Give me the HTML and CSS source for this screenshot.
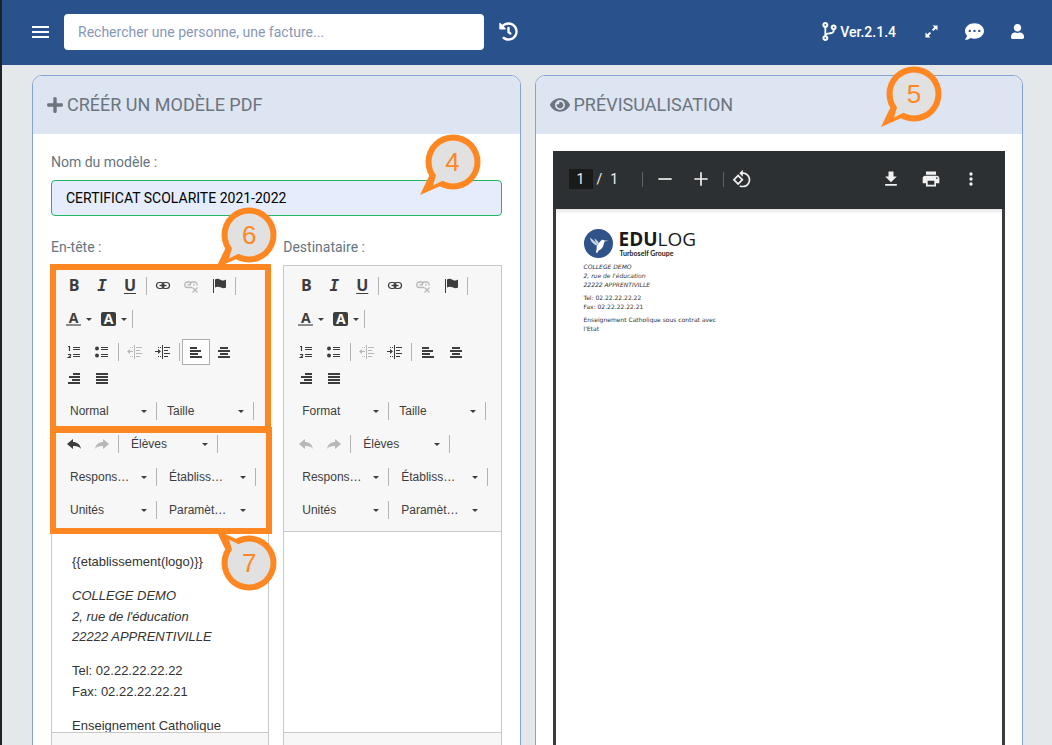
FILE: index.html
```html
<!DOCTYPE html>
<html lang="fr">
<head>
<meta charset="utf-8">
<title>Créer un modèle PDF</title>
<link rel="stylesheet" href="styles.css">
</head>
<body>
<svg class="sprite" aria-hidden="true">
  <symbol id="link" viewBox="0 0 16 16"><g fill="none" stroke="currentColor"><rect x="1.500" y="4.500" width="7.500" height="6" rx="3" stroke-width="1.200"/><rect x="7" y="4.500" width="7.500" height="6" rx="3" stroke-width="1.200"/><path d="M4.500 7.500h7" stroke-width="1.300"/></g></symbol>
  <symbol id="unlink" viewBox="0 0 16 16"><g fill="none" stroke="currentColor" stroke-width="1.300"><path d="M9 9.500H4.500a2.500 2.500 0 0 1 0-5.500H6a3 3 0 0 1 2.500 1.500M7 6.800A2.800 2.800 0 0 1 9.500 4h2a2.600 2.600 0 0 1 2.500 3.500M4.500 6.800H8M10 6.800h2"/><path d="M9.500 9.500l5 5m0-5l-5 5"/></g></symbol>
  <symbol id="flag" viewBox="0 0 16 16"><path fill="currentColor" d="M2 1h1v14H2zM4 1.500C6 0 8 1 10 2s3.500.5 5-.500v8c-1.500 1-3 1-5 0s-4-1-6 0z"/></symbol>
  <symbol id="ol" viewBox="0 0 16 16"><g fill="none" stroke="currentColor" stroke-width="1.200"><path d="M2 2.500h1.500V7M2 10.500h2.500v1.500L2.500 13.500h2.500M7 3.500h7M7 5.500h7M7 10.500h7M7 12.500h7"/></g></symbol>
  <symbol id="ul" viewBox="0 0 16 16"><g fill="currentColor"><circle cx="3" cy="4.500" r="2"/><circle cx="3" cy="11.500" r="2"/><path d="M7 3h7v1H7zM7 5h7v1H7zM7 10h7v1H7zM7 12h7v1H7z"/></g></symbol>
  <symbol id="outdent" viewBox="0 0 16 16"><path fill="currentColor" d="M7 1h1v14H7zM9 3h6v1H9zM9 6h4v1H9zM9 9h6v1H9zM9 12h4v1H9zM0 7.500L3 5v2h3v1H3v2zM3 3h1v1H3zM5 3h1v1H5zM3 12h1v1H3zM5 12h1v1H5z"/></symbol>
  <symbol id="indent" viewBox="0 0 16 16"><path fill="currentColor" d="M7 1h1v14H7zM9 3h6v1H9zM9 6h4v1H9zM9 9h6v1H9zM9 12h4v1H9zM6 7.500L3 5v2H0v1h3v2zM3 3h1v1H3zM5 3h1v1H5zM3 12h1v1H3zM5 12h1v1H5z"/></symbol>
  <symbol id="left" viewBox="0 0 16 16"><path fill="currentColor" d="M2 3h7v2H2zM2 6h11v2H2zM2 9h8v2H2zM2 12h12v2H2z"/></symbol>
  <symbol id="center" viewBox="0 0 16 16"><path fill="currentColor" d="M4 3h8v2H4zM2 6h12v2H2zM4 9h8v2H4zM2 12h12v2H2z"/></symbol>
  <symbol id="right" viewBox="0 0 16 16"><path fill="currentColor" d="M7 3h7v2H7zM3 6h11v2H3zM6 9h8v2H6zM2 12h12v2H2z"/></symbol>
  <symbol id="justify" viewBox="0 0 16 16"><path fill="currentColor" d="M2 3h12v2H2zM2 6h12v2H2zM2 9h12v2H2zM2 12h12v2H2z"/></symbol>
  <symbol id="undo" viewBox="0 0 16 16"><path fill="currentColor" d="M1 8l6-5v3c4 0 7 2 8 7-2-2.500-4-3.200-8-3v3z"/></symbol>
  <symbol id="redo" viewBox="0 0 16 16"><path fill="currentColor" d="M15 8L9 3v3c-4 0-7 2-8 7 2-2.500 4-3.200 8-3v3z"/></symbol>
  <symbol id="bubble" viewBox="0 0 62 62"><circle cx="34" cy="28" r="27.500" fill="#ff8721"/><path fill="#ff8721" d="M1 61L12 38l14 12z"/><circle cx="34" cy="28" r="21.500" fill="#e1e1e1"/><path fill="#e1e1e1" d="M18 38l-4 13.500L25 46z"/></symbol>
</svg>

<div class="app">
  <header class="topbar">
    <button class="menu" aria-label="Menu"><span></span><span></span><span></span></button>
    <input class="search" type="search" aria-label="Rechercher" placeholder="Rechercher une personne, une facture...">
    <button class="history" aria-label="Historique"><svg viewBox="0 0 512 512" width="19" height="19"><path fill="currentColor" d="M504 255.531c.253 136.640-111.180 248.372-247.820 248.468-59.015.042-113.223-20.530-155.822-54.911-11.077-8.940-11.905-25.541-1.839-35.607l11.267-11.267c8.609-8.609 22.353-9.551 31.891-1.984C173.062 425.135 212.781 440 256 440c101.705 0 184-82.311 184-184 0-101.705-82.311-184-184-184-48.814 0-93.149 18.969-126.068 49.932l50.754 50.754c10.080 10.080 2.941 27.314-11.313 27.314H24c-8.837 0-16-7.163-16-16V38.627c0-14.254 17.234-21.393 27.314-11.314l49.372 49.372C129.209 34.136 189.552 8 256 8c136.810 0 247.747 110.780 248 247.531zm-180.912 78.784l9.823-12.630c8.138-10.463 6.253-25.542-4.210-33.679L288 256.349V152c0-13.255-10.745-24-24-24h-16c-13.255 0-24 10.745-24 24v135.651l65.409 50.874c10.463 8.137 25.541 6.253 33.679-4.210z"/></svg></button>
    <a class="version" href="#"><svg viewBox="0 0 384 512" width="15" height="19"><path fill="currentColor" d="M384 144c0-44.200-35.800-80-80-80s-80 35.800-80 80c0 36.400 24.300 67.100 57.500 76.800-.6 16.100-4.200 28.500-11 36.900-15.400 19.200-49.300 22.400-85.200 25.700-28.200 2.600-57.400 5.400-81.300 16.900v-144c32.500-10.200 56-40.500 56-76.300 0-44.200-35.800-80-80-80S0 35.800 0 80c0 35.800 23.500 66.100 56 76.300v199.300C23.500 365.900 0 396.200 0 432c0 44.200 35.800 80 80 80s80-35.800 80-80c0-34-21.200-63.100-51.200-74.600 3.100-5.200 7.800-9.800 14.900-13.400 16.200-8.200 40.400-10.400 66.100-12.800 42.200-3.900 90-8.400 118.200-43.400 14-17.400 21.100-39.800 21.600-67.900 31.600-10.800 54.400-40.700 54.400-75.900zM80 56a24 24 0 1 1 0 48 24 24 0 1 1 0-48zm0 352a24 24 0 1 1 0 48 24 24 0 1 1 0-48zm224-288a24 24 0 1 1 0 48 24 24 0 1 1 0-48z"/></svg>Ver.2.1.4</a>
    <nav class="actions">
      <button aria-label="Plein écran"><svg viewBox="0 0 13 13" width="13" height="13"><path fill="currentColor" d="M7.500.5h5v5L10.700 3.700 8.300 6.100 6.900 4.700 9.300 2.300zM5.500 12.500h-5v-5l1.800 1.800 2.400-2.400 1.400 1.400-2.400 2.400z"/></svg></button>
      <button aria-label="Messages"><svg viewBox="0 0 512 512" width="19" height="19"><path fill="currentColor" fill-rule="evenodd" d="M256 32C114.600 32 0 125.100 0 240c0 49.600 21.400 95 57 130.700C44.500 421.100 2.700 466 2.200 466.500c-2.200 2.300-2.800 5.700-1.500 8.700S4.800 480 8 480c66.300 0 116-31.800 140.600-51.400 32.700 12.300 69 19.400 107.400 19.400 141.400 0 256-93.100 256-208S397.400 32 256 32zM128 208a32 32 0 1 1 0 64 32 32 0 1 1 0-64zm128 0a32 32 0 1 1 0 64 32 32 0 1 1 0-64zm128 0a32 32 0 1 1 0 64 32 32 0 1 1 0-64z"/></svg></button>
      <button aria-label="Compte"><svg viewBox="0 0 448 512" width="13" height="15"><path fill="currentColor" d="M224 256c70.700 0 128-57.300 128-128S294.700 0 224 0 96 57.300 96 128s57.300 128 128 128zm89.600 32h-16.700c-22.200 10.200-46.900 16-72.900 16s-50.600-5.800-72.900-16h-16.700C60.200 288 0 348.200 0 422.400V464c0 26.500 21.500 48 48 48h352c26.500 0 48-21.500 48-48v-41.600c0-74.200-60.200-134.400-134.400-134.400z"/></svg></button>
    </nav>
  </header>

  <main class="columns">
    <section class="card">
      <h1 class="card-title"><svg viewBox="0 0 448 512" width="16" height="18"><path fill="currentColor" d="M416 208H272V64c0-17.670-14.330-32-32-32h-32c-17.670 0-32 14.330-32 32v144H32c-17.670 0-32 14.330-32 32v32c0 17.670 14.330 32 32 32h144v144c0 17.670 14.330 32 32 32h32c17.670 0 32-14.330 32-32V304h144c17.670 0 32-14.330 32-32v-32c0-17.670-14.330-32-32-32z"/></svg>CRÉÉR UN MODÈLE PDF</h1>
      <form class="card-body form">
        <div class="field">
          <label for="nom">Nom du modèle :</label>
          <input id="nom" type="text" value="CERTIFICAT SCOLARITE 2021-2022">
          <div class="callout callout-name"><svg><use href="#bubble"/></svg><span>4</span></div>
        </div>
        <div class="editors">
          <div class="editor-field">
            <span class="label" id="entete">En-tête :</span>
            <div class="editor" role="group" aria-labelledby="entete">
              <div class="toolbar">
                <div class="row"><button type="button" class="b">B</button><button type="button" class="i">I</button><button type="button" class="u">U</button><i class="sep"></i><button type="button" aria-label="Lien"><svg><use href="#link"/></svg></button><button type="button" aria-label="Supprimer le lien" disabled><svg><use href="#unlink"/></svg></button><button type="button" aria-label="Ancre"><svg><use href="#flag"/></svg></button><i class="sep"></i></div>
                <div class="row"><button type="button" class="color"><span class="fg">A</span></button><button type="button" class="color"><span class="bg">A</span></button><i class="sep"></i></div>
                <div class="wrap">
                  <div class="row"><button type="button" aria-label="Liste numérotée"><svg><use href="#ol"/></svg></button><button type="button" aria-label="Liste à puces"><svg><use href="#ul"/></svg></button><i class="sep"></i><button type="button" aria-label="Diminuer le retrait" disabled><svg><use href="#outdent"/></svg></button><button type="button" aria-label="Augmenter le retrait"><svg><use href="#indent"/></svg></button><i class="sep"></i><button type="button" class="on" aria-label="Aligner à gauche"><svg><use href="#left"/></svg></button><button type="button" aria-label="Centrer"><svg><use href="#center"/></svg></button></div>
                  <div class="row"><button type="button" aria-label="Aligner à droite"><svg><use href="#right"/></svg></button><button type="button" aria-label="Justifier"><svg><use href="#justify"/></svg></button></div>
                </div>
                <div class="row tight"><span class="combo"><select aria-label="Format"><option>Normal</option></select></span><i class="sep"></i><span class="combo"><select aria-label="Taille"><option>Taille</option></select></span><i class="sep"></i></div>
                <div class="row"><button type="button" aria-label="Annuler"><svg><use href="#undo"/></svg></button><button type="button" aria-label="Rétablir" disabled><svg><use href="#redo"/></svg></button><i class="sep"></i><span class="combo"><select aria-label="Élèves"><option>Élèves</option></select></span><i class="sep"></i></div>
                <div class="row"><span class="combo"><select aria-label="Responsables"><option>Respons…</option></select></span><i class="sep"></i><span class="combo"><select aria-label="Établissement"><option>Établiss…</option></select></span><i class="sep"></i></div>
                <div class="row"><span class="combo"><select aria-label="Unités"><option>Unités</option></select></span><i class="sep"></i><span class="combo"><select aria-label="Paramètres"><option>Paramèt…</option></select></span></div>
              </div>
              <div class="content" contenteditable="true" spellcheck="false">
                <p>{{etablissement(logo)}}</p>
                <p><em>COLLEGE DEMO<br>2, rue de l'éducation<br>22222 APPRENTIVILLE</em></p>
                <p>Tel: 02.22.22.22.22<br>Fax: 02.22.22.22.21</p>
                <p>Enseignement Catholique</p>
              </div>
              <div class="status"></div>
              <div class="frame frame-format"></div>
              <div class="frame frame-fields"></div>
              <div class="callout callout-format"><svg><use href="#bubble"/></svg><span>6</span></div>
              <div class="callout callout-fields"><svg class="flip"><use href="#bubble"/></svg><span>7</span></div>
            </div>
          </div>
          <div class="editor-field">
            <span class="label" id="dest">Destinataire :</span>
            <div class="editor" role="group" aria-labelledby="dest">
              <div class="toolbar">
                <div class="row"><button type="button" class="b">B</button><button type="button" class="i">I</button><button type="button" class="u">U</button><i class="sep"></i><button type="button" aria-label="Lien"><svg><use href="#link"/></svg></button><button type="button" aria-label="Supprimer le lien" disabled><svg><use href="#unlink"/></svg></button><button type="button" aria-label="Ancre"><svg><use href="#flag"/></svg></button><i class="sep"></i></div>
                <div class="row"><button type="button" class="color"><span class="fg">A</span></button><button type="button" class="color"><span class="bg">A</span></button><i class="sep"></i></div>
                <div class="wrap">
                  <div class="row"><button type="button" aria-label="Liste numérotée"><svg><use href="#ol"/></svg></button><button type="button" aria-label="Liste à puces"><svg><use href="#ul"/></svg></button><i class="sep"></i><button type="button" aria-label="Diminuer le retrait" disabled><svg><use href="#outdent"/></svg></button><button type="button" aria-label="Augmenter le retrait"><svg><use href="#indent"/></svg></button><i class="sep"></i><button type="button" aria-label="Aligner à gauche"><svg><use href="#left"/></svg></button><button type="button" aria-label="Centrer"><svg><use href="#center"/></svg></button></div>
                  <div class="row"><button type="button" aria-label="Aligner à droite"><svg><use href="#right"/></svg></button><button type="button" aria-label="Justifier"><svg><use href="#justify"/></svg></button></div>
                </div>
                <div class="row tight"><span class="combo"><select aria-label="Format"><option>Format</option></select></span><i class="sep"></i><span class="combo"><select aria-label="Taille"><option>Taille</option></select></span><i class="sep"></i></div>
                <div class="row"><button type="button" aria-label="Annuler" disabled><svg><use href="#undo"/></svg></button><button type="button" aria-label="Rétablir" disabled><svg><use href="#redo"/></svg></button><i class="sep"></i><span class="combo"><select aria-label="Élèves"><option>Élèves</option></select></span><i class="sep"></i></div>
                <div class="row"><span class="combo"><select aria-label="Responsables"><option>Respons…</option></select></span><i class="sep"></i><span class="combo"><select aria-label="Établissement"><option>Établiss…</option></select></span><i class="sep"></i></div>
                <div class="row"><span class="combo"><select aria-label="Unités"><option>Unités</option></select></span><i class="sep"></i><span class="combo"><select aria-label="Paramètres"><option>Paramèt…</option></select></span></div>
              </div>
              <div class="content" contenteditable="true" spellcheck="false"></div>
              <div class="status"></div>
            </div>
          </div>
        </div>
      </form>
    </section>

    <section class="card">
      <h2 class="card-title"><svg viewBox="0 0 576 512" width="20" height="18"><path fill="currentColor" d="M572.520 241.400C518.290 135.590 410.930 64 288 64S57.680 135.640 3.480 241.410a32.350 32.350 0 0 0 0 29.190C57.710 376.410 165.070 448 288 448s230.320-71.640 284.520-177.410a32.350 32.350 0 0 0 0-29.190zM288 400a144 144 0 1 1 144-144 143.930 143.930 0 0 1-144 144zm0-240a95.310 95.310 0 0 0-25.310 3.790 47.850 47.850 0 0 1-66.900 66.900A95.780 95.780 0 1 0 288 160z"/></svg>PRÉVISUALISATION</h2>
      <div class="callout callout-preview"><svg><use href="#bubble"/></svg><span>5</span></div>
      <div class="card-body">
        <div class="viewer">
          <div class="viewer-bar">
            <input class="page-no" aria-label="Page" value="1"><span class="page-sep">/</span><span>1</span>
            <i class="vsep first"></i>
            <button aria-label="Zoom arrière"><svg viewBox="0 0 24 24"><path fill="currentColor" d="M4 11h16v2H4z"/></svg></button>
            <button aria-label="Zoom avant"><svg viewBox="0 0 24 24"><path fill="currentColor" d="M4 11h7V4h2v7h7v2h-7v7h-2v-7H4z"/></svg></button>
            <i class="vsep"></i>
            <button aria-label="Pivoter"><svg viewBox="0 0 24 24"><path fill="currentColor" d="M7.340 6.410L.860 12.900l6.490 6.480 6.490-6.480-6.500-6.490zM3.690 12.900l3.660-3.660L11 12.900l-3.660 3.660-3.650-3.660zm15.670-6.260C17.610 4.880 15.300 4 13 4V.760L8.760 5 13 9.240V6c1.790 0 3.580.680 4.950 2.050 2.730 2.730 2.730 7.170 0 9.900C16.580 19.320 14.790 20 13 20c-.970 0-1.940-.210-2.840-.610l-1.490 1.490C10.020 21.620 11.510 22 13 22c2.300 0 4.610-.880 6.360-2.640 3.520-3.510 3.520-9.210 0-12.720z"/></svg></button>
            <div class="viewer-tools">
              <button aria-label="Télécharger"><svg viewBox="0 0 24 24"><path fill="currentColor" d="M19 9h-4V3H9v6H5l7 7 7-7zM5 18v2h14v-2z"/></svg></button>
              <button aria-label="Imprimer"><svg viewBox="0 0 24 24"><path fill="currentColor" d="M19 8H5c-1.660 0-3 1.340-3 3v6h4v4h12v-4h4v-6c0-1.660-1.340-3-3-3zm-3 11H8v-5h8v5zm3-7c-.550 0-1-.450-1-1s.450-1 1-1 1 .450 1 1-.450 1-1 1zm-1-9H6v4h12z"/></svg></button>
              <button aria-label="Plus d'actions"><svg viewBox="0 0 24 24"><g fill="currentColor"><circle cx="12" cy="6" r="2"/><circle cx="12" cy="12" r="2"/><circle cx="12" cy="18" r="2"/></g></svg></button>
            </div>
          </div>
          <div class="sheet">
            <div class="brand">
              <svg viewBox="0 0 29 29" width="29" height="29"><circle cx="14.500" cy="14.500" r="14.500" fill="#2f5288"/><path fill="#fff" d="M13.500 15.500c2-1.500 2.500-3.800 4.500-4.500.8-.3 1.700-.2 2.300.4l4 .4-3.700.7c-.8 1.200-.7 3.500-2 5.700-1.200 2-3 2.900-4 3.300l-1.300 2.500-1.500-.8.900-3.200c0-1.600-.3-2.800.8-4.500z"/><path fill="#cfd9e8" d="M14 17c-1.500-3.200-4-5.500-8-8.500.3 3.500 3 6.500 7 8.200zM15 15.500c0-2.500-2-4.500-4.500-6 .5 2.500 1.500 5 4 6.500z"/></svg>
              <div><div class="brand-name"><b>EDU</b>LOG</div><div class="brand-sub">Turboself Groupe</div></div>
            </div>
            <p><em>COLLEGE DEMO<br>2, rue de l'éducation<br>22222 APPRENTIVILLE</em></p>
            <p>Tel: 02.22.22.22.22<br>Fax: 02.22.22.22.21</p>
            <p>Enseignement Catholique sous contrat avec l'Etat</p>
          </div>
        </div>
      </div>
    </section>
  </main>
</div>
</body>
</html>
```
FILE: styles.css
```css
* { box-sizing: border-box; }

body {
  margin: 0;
  background: #e4e8ea;
  color: #6c757d;
  font: 14px/20px Roboto, sans-serif;
}

button, input, select { margin: 0; font: inherit; color: inherit; }
button { padding: 0; border: 0; background: none; }
h1, h2, p { margin: 0; }
.sprite { display: none; }

.app {
  display: flex;
  flex-direction: column;
  height: 100vh;
  overflow: hidden;
  border-left: 2px solid #1d2229;
}

/* Top bar */
.topbar {
  display: flex;
  flex: none;
  align-items: center;
  height: 65px;
  padding: 0 13px 2px 30px;
  background: #29528c;
  color: #fff;
}
.menu { display: grid; gap: 3px; width: 17px; margin-right: 15px; }
.menu span { height: 2px; background: #fff; }
.search {
  flex: 0 1 420px;
  min-width: 0;
  height: 36px;
  padding: 0 14px;
  border: 0;
  border-radius: 4px;
  background: #fff;
  color: #333;
}
.search::placeholder { color: #8898b5; opacity: 1; }
.history { display: flex; margin-left: 15px; }
.version {
  display: flex;
  align-items: center;
  gap: 3px;
  margin: 0 14px 0 auto;
  color: #fff;
  font-weight: 500;
  text-decoration: none;
}
.actions { display: flex; }
.actions button { display: grid; place-items: center; width: 43px; height: 36px; }

/* Cards */
.columns {
  display: grid;
  grid-template-columns: 1fr 1fr;
  flex: 1;
  gap: 14px;
  padding: 10px 29px 0 30px;
}
.card {
  position: relative;
  border: 1px solid #86a3d3;
  border-radius: 10px 10px 0 0;
  background: #fff;
}
.card-title {
  display: flex;
  align-items: center;
  gap: 4px;
  height: 58px;
  padding: 0 14px;
  border-radius: 9px 9px 0 0;
  background: #dde4f2;
  font-size: 18px;
  font-weight: 400;
}
.card-body { padding: 17px; }
.form { padding: 17px 18px; }

/* Form */
.field { position: relative; padding: 1px 0 21px; }
.field label, .label { display: block; margin-bottom: 8px; color: #66757f; }
.field input {
  display: block;
  width: 100%;
  height: 36px;
  padding: 0 14px;
  border: 1px solid #22b563;
  border-radius: 4px;
  background: #e5edfc;
  color: #000;
}
.editors { display: grid; grid-template-columns: 1fr 1fr; gap: 14px; }
.editor { position: relative; border: 1px solid #c8c8c8; font-family: "Liberation Sans", Arial, sans-serif; }

/* Editor toolbar */
.toolbar {
  display: grid;
  gap: 7px;
  padding: 7px 0 8px 8px;
  border-bottom: 1px solid #c8c8c8;
  background: #f7f7f7;
  color: #3d3d3d;
  font-size: 12px;
}
.row { display: flex; align-items: center; height: 26px; }
.row button { display: grid; place-items: center; flex: none; width: 28px; height: 26px; }
.row button:disabled { color: #b8b8b8; }
.row svg { width: 16px; height: 16px; }
.row .on { border: 1px solid #aeaeae; background: #fff; }
.row .b, .row .u { padding-bottom: 2px; font: bold 16px/16px "Open Sans", sans-serif; }
.row .i { font: italic bold 16px/16px "DejaVu Sans Mono", monospace; }
.row .u { text-decoration: underline 1px; text-underline-offset: 2px; }
.sep { flex: none; width: 1px; height: 18px; margin: 0 2px; background: #b4b4b4; }
.tight .sep { margin-right: 0; }
.row .color { display: flex; align-items: center; gap: 5px; width: 35px; padding-left: 6px; font: bold 14px/12px "Open Sans", sans-serif; }
.color::after, .combo::after {
  content: "";
  border: 3px solid transparent;
  border-top-color: #3d3d3d;
  border-bottom: 0;
}
.fg { width: 15px; border-bottom: 2px solid #8c8c8c; }
.bg { width: 15px; padding: 1px 0; border-radius: 2px; background: #3d3d3d; color: #fff; }
.combo { position: relative; flex: none; width: 94px; }
.combo::after { position: absolute; top: 12px; right: 7px; pointer-events: none; }
.combo select {
  display: block;
  width: 100%;
  height: 26px;
  padding: 0 16px 0 10px;
  border: 0;
  background: none;
  appearance: none;
}

/* Editor content */
.content {
  height: 200px;
  padding: 20px 20px 0;
  overflow: hidden;
  color: #333;
  font-size: 13px;
  line-height: 1.6;
}
.content p { margin-bottom: 13px; }
.status { height: 30px; border-top: 1px solid #c8c8c8; background: #f7f7f7; }

/* Annotations laid over the page */
.frame { position: absolute; left: -2px; border: 6px solid #ff8721; pointer-events: none; }
.frame-format { top: -2px; right: -3px; height: 168px; }
.frame-fields { top: 161px; right: -4px; height: 107px; }
.callout { position: absolute; width: 62px; height: 62px; pointer-events: none; }
.callout svg { display: block; width: 62px; height: 62px; }
.callout span {
  position: absolute;
  inset: 0 0 6px 6px;
  color: #ff8721;
  font: 26px/56px "Liberation Sans", Arial, sans-serif;
  text-align: center;
}
.flip { transform: scaleY(-1); }
.callout-name { top: -17px; right: 21px; }
.callout-format { top: -59px; right: -9px; }
.callout-fields { top: 263px; right: -9px; }
.callout-fields span { inset: 6px 0 0 6px; }
.callout-preview { top: -10px; right: 80px; }

/* PDF viewer */
.viewer { height: 700px; background: #3a3c3f; }
.viewer-bar {
  display: flex;
  align-items: center;
  height: 58px;
  padding: 0 18px 2px 16px;
  background: #2d3033;
  color: #f1f1f1;
}
.page-no { width: 24px; height: 20px; padding: 0; border: 0; background: #191b1b; text-align: center; }
.page-sep { margin: 0 8px 0 4px; }
.vsep { width: 1px; height: 15px; margin: 0 2px 0 6px; background: #5f6265; }
.vsep.first { margin: 0 6px 0 24px; }
.viewer-bar button { display: grid; place-items: center; width: 32px; height: 32px; }
.viewer-bar button + button { margin-left: 4px; }
.viewer-bar svg { width: 20px; height: 20px; }
.viewer-tools { display: flex; margin-left: auto; }
.viewer-bar .viewer-tools button + button { margin-left: 8px; }
.sheet {
  height: 642px;
  margin: 0 3px;
  padding: 20px 28px;
  background: linear-gradient(#e6e6e6, #fff 5px);
  color: #333;
  font: 6px/9px "DejaVu Sans", sans-serif;
}
.sheet p { width: 142px; margin-bottom: 4px; }
.brand { display: flex; gap: 6px; margin-bottom: 4px; color: #1a1a1a; }
.brand-name { font: 19px/21px "Open Sans", sans-serif; }
.brand-sub { font: bold 7px/7px Lato, sans-serif; padding-left: 1px; }
```
